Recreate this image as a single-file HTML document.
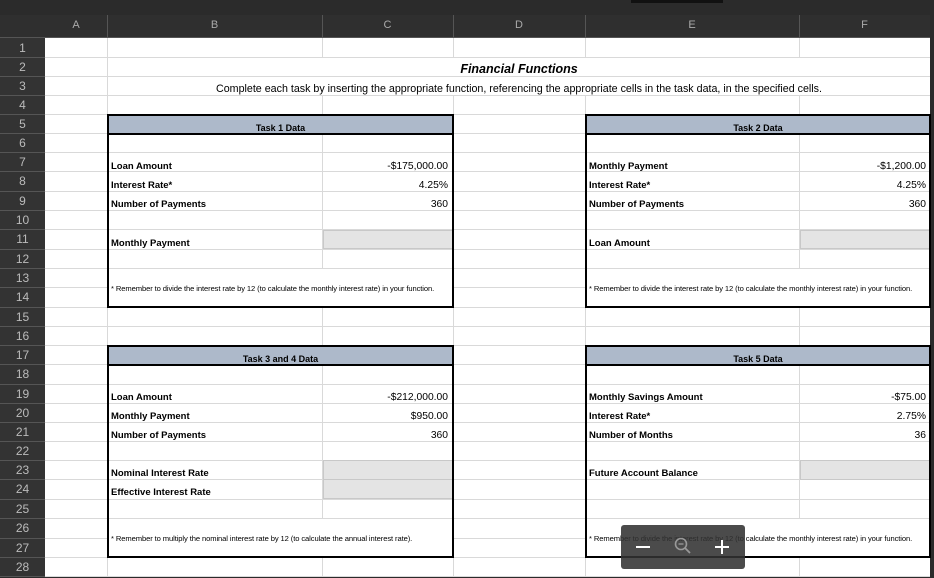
<!DOCTYPE html>
<html><head><meta charset="utf-8">
<style>
body{margin:0;width:934px;height:578px;overflow:hidden;background:#2b2b2b;font-family:"Liberation Sans",sans-serif;position:relative}
.a{position:absolute;box-sizing:border-box}
.t{position:absolute;font-size:9.5px;color:#000;white-space:nowrap;line-height:12px;margin-top:2px}
.b{font-weight:bold}
.r{text-align:right;font-size:10.3px}
.n{font-size:7.6px;letter-spacing:-0.1px}
.hd{position:absolute;color:#aaa;font-size:11px;text-align:center}
</style></head><body>
<div class="a" style="left:631px;top:0;width:92px;height:3px;background:#111"></div>
<div class="a" style="left:0;top:15px;width:930px;height:23px;background:#2f2f2f;border-bottom:1px solid #555"></div>
<div class="a" style="left:45px;top:38px;width:885px;height:538px;background:#fff"></div>
<div id="g"></div>
<script>
var T=[38,57,76,95,114,133,152,171,191,210,229,249,268,287,307,326,345,364,384,403,422,441,460,479,499,518,538,557,576];
var C=[45,107,322,453,585,799,930],L="ABCDEF",h="";
for(var i=0;i<6;i++){h+='<div class="hd" style="left:'+C[i]+'px;top:19px;width:'+(C[i+1]-C[i])+'px">'+L[i]+'</div>';if(i>0)h+='<div class="a" style="left:'+C[i]+'px;top:15px;width:1px;height:23px;background:#555"></div>';}
for(var r=0;r<28;r++){h+='<div class="hd" style="left:0;top:'+(T[r]+3)+'px;width:45px;color:#bbb;font-size:12px">'+(r+1)+'</div>';
h+='<div class="a" style="left:0;top:'+T[r+1]+'px;width:45px;height:1px;background:#555"></div>';
h+='<div class="a" style="left:45px;top:'+T[r+1]+'px;width:885px;height:1px;background:#d9d9d9"></div>';}
for(var i=1;i<6;i++)h+='<div class="a" style="left:'+C[i]+'px;top:38px;width:1px;height:538px;background:#d9d9d9"></div>';
document.getElementById('g').innerHTML=h;
</script>
<div class="a" style="left:0;top:38px;width:45px;height:538px;background:#333;z-index:-1"></div>
<div class="a" style="left:108px;top:58px;width:822px;height:18px;background:#fff"></div>
<div class="a" style="left:108px;top:77px;width:822px;height:18px;background:#fff"></div>
<div class="t b" style="left:108px;top:60px;width:822px;text-align:center;font-style:italic;font-size:12.5px;line-height:14px">Financial Functions</div>
<div class="t" style="left:108px;top:81px;width:822px;text-align:center;font-size:10.7px">Complete each task by inserting the appropriate function, referencing the appropriate cells in the task data, in the specified cells.</div>

<!-- Box 1 -->
<div class="a" style="left:108px;top:115px;width:345px;height:18px;background:#adb9ca"></div>
<div class="a" style="left:108px;top:269px;width:345px;height:37px;background:#fff"></div>
<div class="a" style="left:323px;top:230px;width:130px;height:19px;background:#e4e4e4;border:1px solid #c8c8c8"></div>
<div class="a" style="left:107px;top:114px;width:347px;height:194px;border:2px solid #000"></div>
<div class="a" style="left:107px;top:133px;width:347px;height:2px;background:#000"></div>
<div class="t b" style="left:108px;top:120px;width:345px;text-align:center;font-size:9px">Task 1 Data</div>
<div class="t b" style="left:111px;top:159px">Loan Amount</div>
<div class="t b" style="left:111px;top:178px">Interest Rate*</div>
<div class="t b" style="left:111px;top:197px">Number of Payments</div>
<div class="t b" style="left:111px;top:236px">Monthly Payment</div>
<div class="t r" style="left:322px;top:159px;width:126px">-$175,000.00</div>
<div class="t r" style="left:322px;top:178px;width:126px">4.25%</div>
<div class="t r" style="left:322px;top:197px;width:126px">360</div>
<div class="t n" style="left:111px;top:281px">* Remember to divide the interest rate by 12 (to calculate the monthly interest rate) in your function.</div>

<!-- Box 2 -->
<div class="a" style="left:586px;top:115px;width:344px;height:18px;background:#adb9ca"></div>
<div class="a" style="left:586px;top:269px;width:344px;height:37px;background:#fff"></div>
<div class="a" style="left:800px;top:230px;width:130px;height:19px;background:#e4e4e4;border:1px solid #c8c8c8"></div>
<div class="a" style="left:585px;top:114px;width:346px;height:194px;border:2px solid #000"></div>
<div class="a" style="left:585px;top:133px;width:346px;height:2px;background:#000"></div>
<div class="t b" style="left:586px;top:120px;width:344px;text-align:center;font-size:9px">Task 2 Data</div>
<div class="t b" style="left:589px;top:159px">Monthly Payment</div>
<div class="t b" style="left:589px;top:178px">Interest Rate*</div>
<div class="t b" style="left:589px;top:197px">Number of Payments</div>
<div class="t b" style="left:589px;top:236px">Loan Amount</div>
<div class="t r" style="left:799px;top:159px;width:127px">-$1,200.00</div>
<div class="t r" style="left:799px;top:178px;width:127px">4.25%</div>
<div class="t r" style="left:799px;top:197px;width:127px">360</div>
<div class="t n" style="left:589px;top:281px">* Remember to divide the interest rate by 12 (to calculate the monthly interest rate) in your function.</div>

<!-- Box 3 -->
<div class="a" style="left:108px;top:346px;width:345px;height:18px;background:#adb9ca"></div>
<div class="a" style="left:108px;top:519px;width:345px;height:37px;background:#fff"></div>
<div class="a" style="left:323px;top:460px;width:130px;height:20px;background:#e4e4e4;border:1px solid #c8c8c8"></div>
<div class="a" style="left:323px;top:479px;width:130px;height:20px;background:#e4e4e4;border:1px solid #c8c8c8"></div>
<div class="a" style="left:107px;top:345px;width:347px;height:213px;border:2px solid #000"></div>
<div class="a" style="left:107px;top:364px;width:347px;height:2px;background:#000"></div>
<div class="t b" style="left:108px;top:351px;width:345px;text-align:center;font-size:9px">Task 3 and 4 Data</div>
<div class="t b" style="left:111px;top:390px">Loan Amount</div>
<div class="t b" style="left:111px;top:409px">Monthly Payment</div>
<div class="t b" style="left:111px;top:428px">Number of Payments</div>
<div class="t b" style="left:111px;top:466px">Nominal Interest Rate</div>
<div class="t b" style="left:111px;top:485px">Effective Interest Rate</div>
<div class="t r" style="left:322px;top:390px;width:126px">-$212,000.00</div>
<div class="t r" style="left:322px;top:409px;width:126px">$950.00</div>
<div class="t r" style="left:322px;top:428px;width:126px">360</div>
<div class="t n" style="left:111px;top:531px">* Remember to multiply the nominal interest rate by 12 (to calculate the annual interest rate).</div>

<!-- Box 4 -->
<div class="a" style="left:586px;top:346px;width:344px;height:18px;background:#adb9ca"></div>
<div class="a" style="left:586px;top:519px;width:344px;height:37px;background:#fff"></div>
<div class="a" style="left:800px;top:460px;width:130px;height:20px;background:#e4e4e4;border:1px solid #c8c8c8"></div>
<div class="a" style="left:585px;top:345px;width:346px;height:213px;border:2px solid #000"></div>
<div class="a" style="left:585px;top:364px;width:346px;height:2px;background:#000"></div>
<div class="t b" style="left:586px;top:351px;width:344px;text-align:center;font-size:9px">Task 5 Data</div>
<div class="t b" style="left:589px;top:390px">Monthly Savings Amount</div>
<div class="t b" style="left:589px;top:409px">Interest Rate*</div>
<div class="t b" style="left:589px;top:428px">Number of Months</div>
<div class="t b" style="left:589px;top:466px">Future Account Balance</div>
<div class="t r" style="left:799px;top:390px;width:127px">-$75.00</div>
<div class="t r" style="left:799px;top:409px;width:127px">2.75%</div>
<div class="t r" style="left:799px;top:428px;width:127px">36</div>
<div class="t n" style="left:589px;top:531px">* Remember to divide the interest rate by 12 (to calculate the monthly interest rate) in your function.</div>

<!-- zoom widget -->
<div class="a" style="left:621px;top:525px;width:124px;height:44px;background:rgba(50,50,50,0.88);border-radius:3px"></div>
<div class="a" style="left:636px;top:546px;width:14px;height:2px;background:#fff"></div>
<svg class="a" style="left:672px;top:535px" width="22" height="22" viewBox="0 0 22 22"><circle cx="9" cy="9" r="5.5" fill="none" stroke="#999" stroke-width="1.6"/><line x1="13" y1="13" x2="18" y2="18" stroke="#999" stroke-width="1.8"/><line x1="6.5" y1="9" x2="11.5" y2="9" stroke="#999" stroke-width="1.3"/></svg>
<div class="a" style="left:715px;top:546px;width:14px;height:2px;background:#fff"></div>
<div class="a" style="left:721px;top:540px;width:2px;height:14px;background:#fff"></div>
</body></html>
